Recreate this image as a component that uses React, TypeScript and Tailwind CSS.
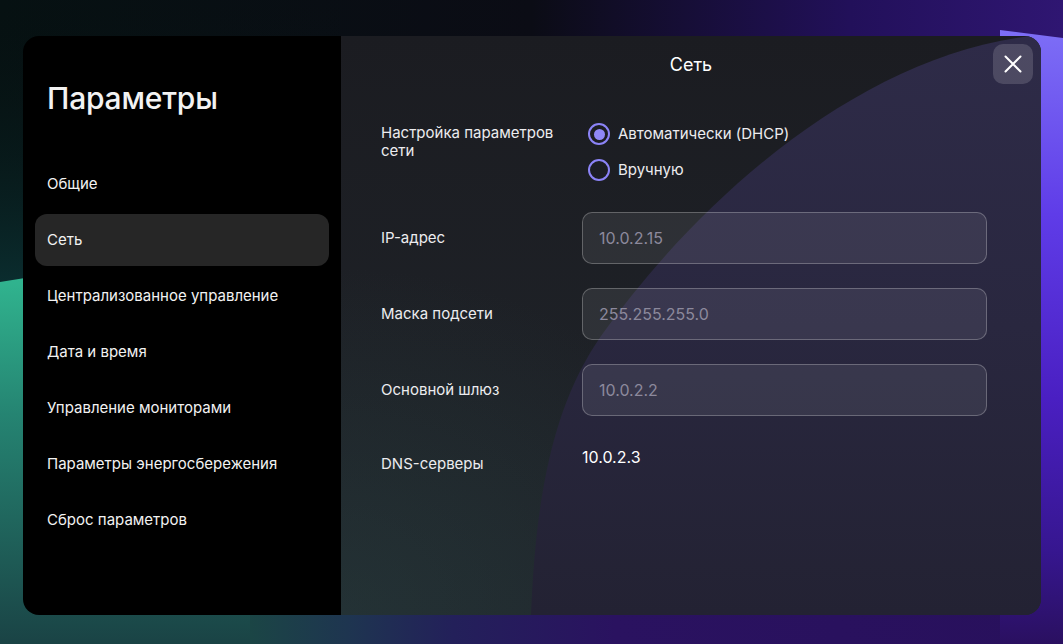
import { useState } from 'react';

const menu = [
  'Общие',
  'Сеть',
  'Централизованное управление',
  'Дата и время',
  'Управление мониторами',
  'Параметры энергосбережения',
  'Сброс параметров',
];

const fields = [
  { label: 'IP-адрес', value: '10.0.2.15' },
  { label: 'Маска подсети', value: '255.255.255.0' },
  { label: 'Основной шлюз', value: '10.0.2.2' },
];

function Backdrop() {
  return (
    <svg className="absolute inset-0 h-full w-full" viewBox="0 0 1063 644" preserveAspectRatio="none">
      <defs>
        <linearGradient id="base" x1="0" y1="0" x2="1" y2="0">
          <stop offset="0" stopColor="#061112" />
          <stop offset="0.5" stopColor="#0b0c15" />
          <stop offset="0.8" stopColor="#22105a" />
          <stop offset="1" stopColor="#2f1672" />
        </linearGradient>
        <linearGradient id="leftTint" x1="0" y1="0" x2="0" y2="1">
          <stop offset="0" stopColor="#07100f" stopOpacity="0" />
          <stop offset="1" stopColor="#0b3032" />
        </linearGradient>
        <linearGradient id="teal" x1="0" y1="0" x2="0" y2="1">
          <stop offset="0" stopColor="#35c79a" />
          <stop offset="0.45" stopColor="#258472" />
          <stop offset="1" stopColor="#1a4345" />
        </linearGradient>
        <linearGradient id="bottomBand" x1="0" y1="0" x2="1" y2="0">
          <stop offset="0" stopColor="#1b4545" />
          <stop offset="0.12" stopColor="#1e3550" />
          <stop offset="0.25" stopColor="#23205a" />
          <stop offset="0.45" stopColor="#2a1260" />
          <stop offset="1" stopColor="#28105c" />
        </linearGradient>
        <linearGradient id="violet" x1="0" y1="0" x2="0" y2="1">
          <stop offset="0" stopColor="#7d6ef6" />
          <stop offset="0.3" stopColor="#5f3ce8" />
          <stop offset="0.6" stopColor="#4a1fc2" />
          <stop offset="0.85" stopColor="#36168f" />
          <stop offset="1" stopColor="#2a1060" />
        </linearGradient>
      </defs>
      <rect width="1063" height="644" fill="url(#base)" />
      <rect width="340" height="300" fill="url(#leftTint)" />
      <polygon points="0,282 350,226 350,644 0,644" fill="url(#teal)" />
      <rect x="250" y="560" width="813" height="84" fill="url(#bottomBand)" />
      <polygon points="1000,30 1063,38 1063,644 1000,644" fill="url(#violet)" />
    </svg>
  );
}

function Radio({ checked, label }: { checked: boolean; label: string }) {
  return (
    <label className="flex h-6 cursor-pointer items-center gap-2">
      <span className="flex h-[22px] w-[22px] items-center justify-center rounded-full border-2 border-[#8b83f6]">
        {checked && <span className="h-[11px] w-[11px] rounded-full bg-[#8f88f6]" />}
      </span>
      <span className="text-[15px] text-[#ececef]">{label}</span>
    </label>
  );
}

export default function App() {
  const [active, setActive] = useState(1);

  return (
    <div
      className="relative h-[644px] w-full overflow-hidden"
      style={{ fontFamily: 'Inter, "Noto Sans", sans-serif' }}
    >
      <Backdrop />

      <div className="relative flex pl-[23px] pt-[36px]">
        <div className="flex h-[579px] w-[1018px] overflow-hidden rounded-2xl">
          {/* Sidebar */}
          <aside className="w-[318px] shrink-0 bg-black px-3 pt-[44px] text-[#f2f2f2]">
            <h1 className="pl-3 text-[30px] font-medium leading-9 tracking-[-0.2px]">Параметры</h1>
            <nav className="mt-[42px] flex flex-col gap-1">
              {menu.map((item, i) => (
                <button
                  key={item}
                  onClick={() => setActive(i)}
                  className={`flex h-[52px] items-center rounded-xl px-3 text-left text-[15px] ${
                    i === active ? 'bg-[#262626]' : ''
                  }`}
                >
                  {item}
                </button>
              ))}
            </nav>
          </aside>

          {/* Content */}
          <section className="relative flex-1 bg-linear-to-b from-[#1b1c21] to-[#20252b]">
            <svg className="pointer-events-none absolute inset-0 h-full w-full" viewBox="0 0 700 579" preserveAspectRatio="none">
              <defs>
                <linearGradient id="shape" x1="0" y1="0" x2="0" y2="1">
                  <stop offset="0" stopColor="#2e2b48" />
                  <stop offset="0.5" stopColor="#29273f" />
                  <stop offset="1" stopColor="#232233" />
                </linearGradient>
                <radialGradient id="tealGlow" cx="0" cy="1" r="0.6">
                  <stop offset="0" stopColor="#2a4a48" stopOpacity="0.35" />
                  <stop offset="1" stopColor="#2a4a48" stopOpacity="0" />
                </radialGradient>
              </defs>
              <rect width="700" height="579" fill="url(#tealGlow)" />
              <path
                d="M700 0 L690 0 C520 20 360 160 260 300 C215 365 195 450 190 579 L700 579 Z"
                fill="url(#shape)"
              />
            </svg>

            <div className="relative flex flex-col">
              <header className="flex items-center px-2 pt-2">
                <div className="w-10" />
                <h2 className="flex-1 text-center text-[18px] text-white">Сеть</h2>
                <button className="flex h-10 w-10 items-center justify-center rounded-[10px] bg-white/15">
                  <svg width="18" height="18" viewBox="0 0 18 18" fill="none">
                    <path d="M1.5 1.5 L16.5 16.5 M16.5 1.5 L1.5 16.5" stroke="white" strokeWidth="2" strokeLinecap="round" />
                  </svg>
                </button>
              </header>

              <div className="flex flex-col pl-10 pt-[38px] text-[#ececef]">
                <div className="flex">
                  <div className="w-[201px] pt-[2px] text-[15px] leading-[18px]">
                    Настройка параметров
                    <br />
                    сети
                  </div>
                  <div className="flex flex-col gap-3 pl-[6px]">
                    <Radio checked label="Автоматически (DHCP)" />
                    <Radio checked={false} label="Вручную" />
                  </div>
                </div>

                <div className="mt-[30px] flex flex-col gap-6">
                  {fields.map((f) => (
                    <div key={f.label} className="flex items-center">
                      <div className="w-[201px] text-[15px]">{f.label}</div>
                      <input
                        readOnly
                        value={f.value}
                        className="h-[52px] w-[405px] rounded-[10px] border border-white/25 bg-white/[0.08] px-4 text-[16px] text-[#8c899c] outline-none"
                      />
                    </div>
                  ))}

                  <div className="flex">
                    <div className="flex h-12 w-[201px] items-center text-[15px]">DNS-серверы</div>
                    <div className="pt-[7px] text-[16px] leading-5 text-white">10.0.2.3</div>
                  </div>
                </div>
              </div>
            </div>
          </section>
        </div>
      </div>
    </div>
  );
}
